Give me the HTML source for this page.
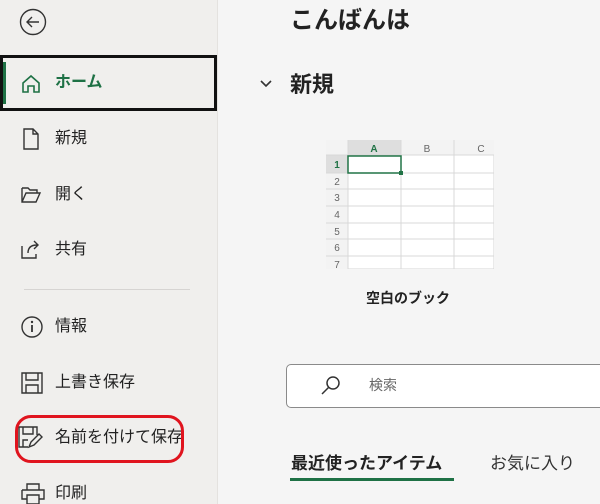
<!DOCTYPE html>
<html><head><meta charset="utf-8"><style>
*{margin:0;padding:0;box-sizing:border-box}
body{width:600px;height:504px;overflow:hidden;background:#f5f5f5;font-family:"Liberation Sans","Noto Sans CJK JP",sans-serif;position:relative;color:#222}
#side{position:absolute;left:0;top:0;width:218px;height:504px;background:#f0efed;border-right:1px solid #e4e2df}
.t{position:absolute;font-size:16px;line-height:20px;white-space:nowrap}
.ic{position:absolute}
</style></head><body>
<div id="side">
<svg class="ic" style="left:19px;top:8px" width="28" height="28" viewBox="0 0 28 28"><circle cx="14" cy="14" r="12.5" fill="none" stroke="#333" stroke-width="1.4"/><path d="M20 14H8M13 9l-5 5 5 5" fill="none" stroke="#333" stroke-width="1.4"/></svg>
<div style="position:absolute;left:0;top:55px;width:217px;height:56px;border:3px solid #111"></div>
<div style="position:absolute;left:3px;top:62px;width:3px;height:42px;background:#1e7145"></div>
<svg class="ic" style="left:20px;top:73px" width="22" height="22" viewBox="0 0 22 22"><path d="M3 10L11 3l8 7v9h-5v-6H8v6H3z" fill="none" stroke="#1e7145" stroke-width="1.6"/></svg>
<div class="t" style="left:55px;top:73px;color:#1e7145;font-weight:bold">ホーム</div>
<svg class="ic" style="left:22px;top:128px" width="18" height="22" viewBox="0 0 18 22"><path d="M2 1h9l5 5v15H2z M11 1v5h5" fill="none" stroke="#333" stroke-width="1.4"/></svg>
<div class="t" style="left:55px;top:129px">新規</div>
<svg class="ic" style="left:20px;top:186px" width="22" height="18" viewBox="0 0 22 18"><path d="M2 2h6l2 2h7v3M2 2v14h14l4-9H6L2 16" fill="none" stroke="#333" stroke-width="1.4"/></svg>
<div class="t" style="left:55px;top:185px">開く</div>
<svg class="ic" style="left:20px;top:238px" width="22" height="22" viewBox="0 0 22 22"><path d="M2 8v12h14v-4M8 15c0-6 4-8 9-8M14 3l4 4-4 4" fill="none" stroke="#333" stroke-width="1.4"/></svg>
<div class="t" style="left:55px;top:240px">共有</div>
<div style="position:absolute;left:24px;top:289px;width:166px;height:1px;background:#d6d4d2"></div>
<svg class="ic" style="left:20px;top:315px" width="24" height="24" viewBox="0 0 24 24"><circle cx="12" cy="12" r="10" fill="none" stroke="#333" stroke-width="1.4"/><path d="M12 10v7" stroke="#333" stroke-width="1.8"/><circle cx="12" cy="7" r="1.2" fill="#333"/></svg>
<div class="t" style="left:55px;top:317px">情報</div>
<svg class="ic" style="left:20px;top:371px" width="24" height="24" viewBox="0 0 24 24"><path d="M2 2h20v20H2zM6 2v7h12V2M6 22v-8h12v8" fill="none" stroke="#333" stroke-width="1.4"/></svg>
<div class="t" style="left:55px;top:373px">上書き保存</div>
<svg class="ic" style="left:17px;top:425px" width="26" height="24" viewBox="0 0 26 24"><path d="M11 22H2V2h18v8M6 2v7h10V2M6 22v-7h5M12 22l2-5 8-8 3 3-8 8z" fill="none" stroke="#333" stroke-width="1.4"/></svg>
<div class="t" style="left:55px;top:428px">名前を付けて保存</div>
<div style="position:absolute;left:15px;top:415px;width:169px;height:48px;border:3px solid #e0141e;border-radius:16px"></div>
<svg class="ic" style="left:20px;top:482px" width="26" height="22" viewBox="0 0 26 22"><path d="M7 8V2h12v6M2 8h22v9h-5M2 8v9h5M7 13h12v9H7z" fill="none" stroke="#333" stroke-width="1.4"/></svg>
<div class="t" style="left:55px;top:484px">印刷</div>
</div>

<div class="t" style="left:290px;top:6px;font-size:24px;line-height:30px;font-weight:bold">こんばんは</div>
<svg class="ic" style="left:259px;top:78px" width="14" height="12" viewBox="0 0 14 12"><path d="M2 3l5 5 5-5" fill="none" stroke="#333" stroke-width="1.6"/></svg>
<div class="t" style="left:290px;top:71px;font-size:22px;line-height:28px;font-weight:bold">新規</div>

<svg class="ic" style="left:326px;top:140px" width="168" height="129" viewBox="0 0 168 129">
<rect width="168" height="129" fill="#fff" stroke="#d4d4d4"/>
<rect x="0" y="0" width="168" height="15" fill="#f3f3f3"/>
<rect x="0" y="0" width="22" height="129" fill="#f3f3f3"/>
<rect x="22" y="0" width="53" height="15" fill="#dedede"/>
<rect x="0" y="15" width="22" height="18" fill="#dedede"/>
<g stroke="#d8d8d8"><path d="M22 0v129M75 0v129M128 0v129"/>
<path d="M0 15h168M0 33h168M0 49h168M0 66h168M0 83h168M0 99h168M0 116h168"/></g>
<rect x="22" y="16" width="53" height="17" fill="none" stroke="#217346" stroke-width="1.5"/>
<rect x="73" y="31" width="4" height="4" fill="#217346"/>
<g font-size="10" fill="#666" text-anchor="middle" font-family="Liberation Sans"><text x="48" y="12" fill="#217346" font-weight="bold">A</text><text x="101" y="12">B</text><text x="155" y="12">C</text>
<text x="11" y="28" fill="#217346" font-weight="bold">1</text><text x="11" y="45">2</text><text x="11" y="61">3</text><text x="11" y="78">4</text><text x="11" y="95">5</text><text x="11" y="111">6</text><text x="11" y="128">7</text></g>
</svg>
<div class="t" style="left:366px;top:288px;font-size:14px;font-weight:bold">空白のブック</div>

<div style="position:absolute;left:286px;top:364px;width:330px;height:44px;background:#fff;border:1px solid #8a8a8a;border-radius:5px"></div>
<svg class="ic" style="left:319px;top:373px" width="24" height="24" viewBox="0 0 24 24"><circle cx="14" cy="10" r="6" fill="none" stroke="#333" stroke-width="1.5"/><path d="M10 14l-7 7" stroke="#333" stroke-width="1.5"/></svg>
<div class="t" style="left:369px;top:375px;font-size:14px;color:#666">検索</div>

<div class="t" style="left:291px;top:453px;font-size:17px;line-height:22px;font-weight:bold">最近使ったアイテム</div>
<div style="position:absolute;left:290px;top:478px;width:164px;height:3px;background:#1e7145"></div>
<div class="t" style="left:490px;top:453px;font-size:17px;line-height:22px;color:#333">お気に入り</div>
</body></html>
